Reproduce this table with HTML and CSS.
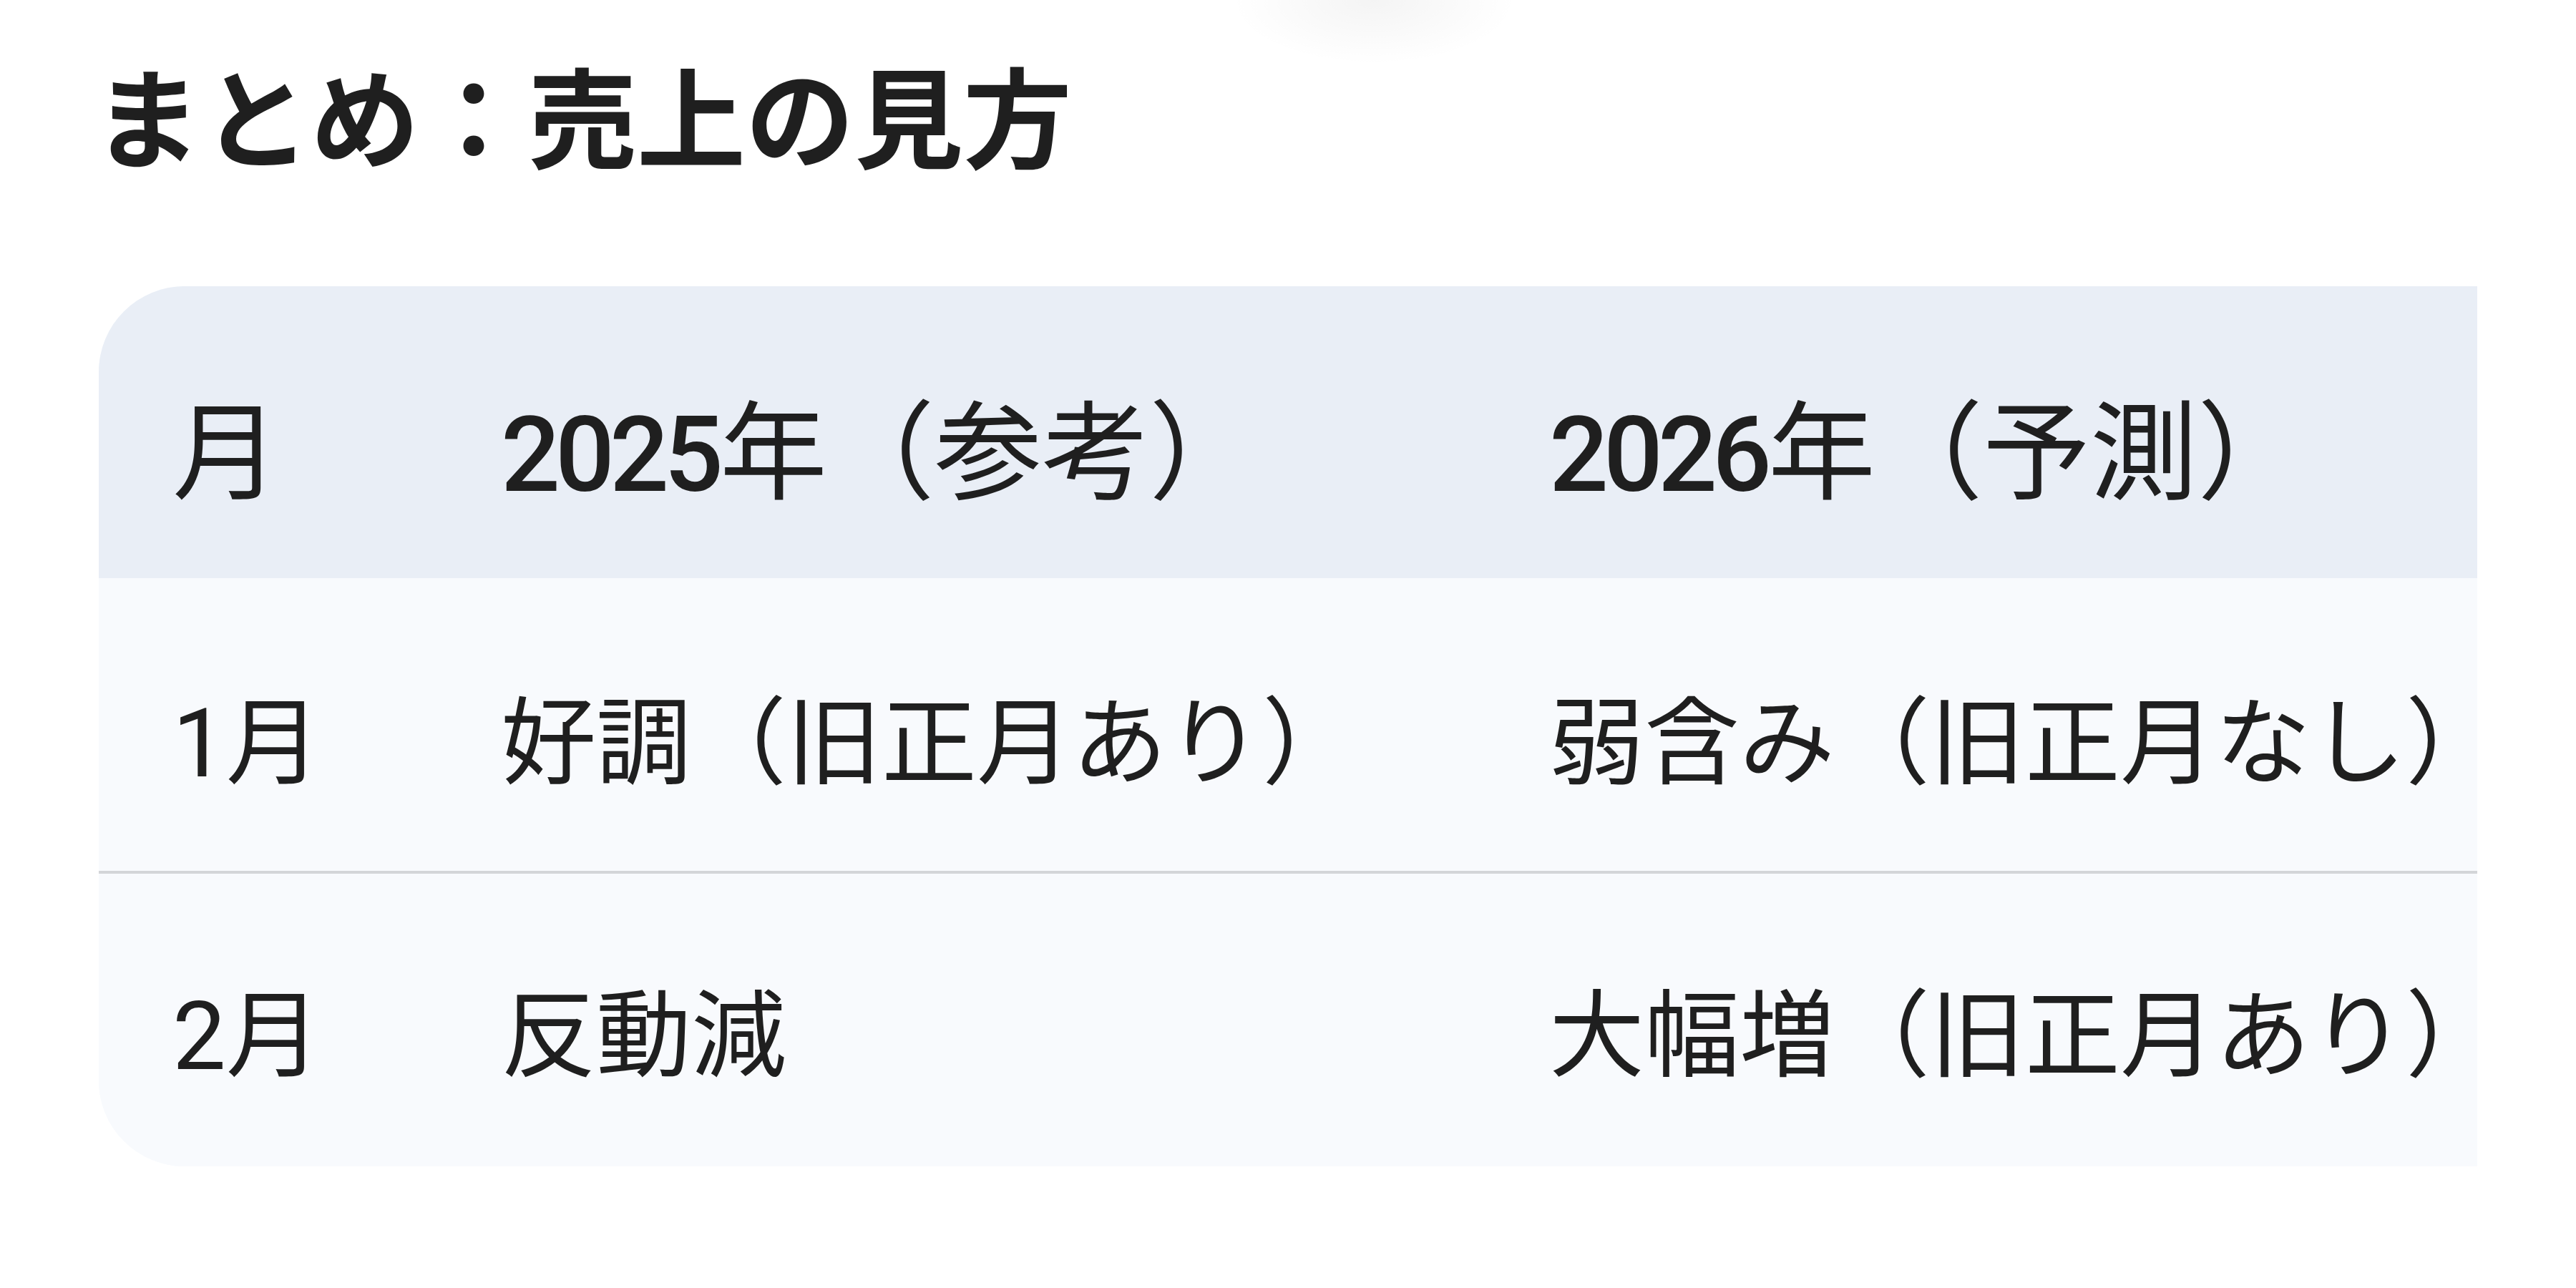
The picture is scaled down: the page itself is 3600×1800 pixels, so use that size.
FILE: index.html
```html
<!DOCTYPE html>
<html lang="ja">
<head>
<meta charset="utf-8">
<title>まとめ：売上の見方</title>
<link rel="stylesheet" href="styles.css">
</head>
<body>
<div class="top-shadow"></div>
<main class="content">
  <h2 class="title">まとめ：売上の見方</h2>
  <div class="table-card">
    <table class="sales">
      <thead>
        <tr>
          <th class="col-month">月</th>
          <th class="col-2025"><span class="num">2025</span>年（参考）</th>
          <th class="col-2026"><span class="num">2026</span>年（予測）</th>
        </tr>
      </thead>
      <tbody>
        <tr>
          <td class="col-month">1月</td>
          <td>好調（旧正月あり）</td>
          <td class="col-2026">弱含み（旧正月なし<span class="trim">）</span></td>
        </tr>
        <tr>
          <td class="col-month">2月</td>
          <td>反動減</td>
          <td class="col-2026">大幅増（旧正月あり<span class="trim">）</span></td>
        </tr>
      </tbody>
    </table>
  </div>
</main>
</body>
</html>
```
FILE: styles.css
```css
html, body {
  margin: 0;
  padding: 0;
  background: #ffffff;
}

body {
  font-family: "Roboto", "Noto Sans CJK JP", sans-serif;
  color: #1f1f1f;
  width: 3600px;
  height: 1800px;
  overflow: hidden;
  position: relative;
}

.top-shadow {
  position: absolute;
  top: 0;
  left: 1720px;
  width: 400px;
  height: 100px;
  background: radial-gradient(ellipse 50% 90% at 50% 0%, rgba(0, 0, 0, 0.045), rgba(0, 0, 0, 0) 100%);
  pointer-events: none;
}

.content {
  padding-left: 138px;
  width: 3324px;
}

.title {
  margin: 0 0 138px -8px;
  padding: 82px 0 0 0;
  font-size: 152px;
  line-height: 180px;
  font-weight: 700;
  color: #1f1f1f;
}

.table-card {
  width: 3324px;
  border-radius: 120px 0 0 120px;
  overflow: hidden;
  background: #f8fafd;
}

.sales {
  width: 100%;
  border-collapse: separate;
  border-spacing: 0;
  white-space: nowrap;
}

.sales th,
.sales td {
  text-align: left;
  padding-left: 96px;
  padding-right: 96px;
  vertical-align: top;
}

.sales thead th {
  background: #e9eef6;
  font-size: 150px;
  font-weight: 400;
  line-height: 200px;
  padding-top: 135px;
  padding-bottom: 71px;
}

.sales thead .num {
  font-weight: 500;
  font-size: 146px;
  letter-spacing: -7px;
  margin-right: 2px;
}

.sales tbody td {
  background: #f8fafd;
  font-size: 133px;
  font-weight: 400;
  line-height: 200px;
  padding-top: 132px;
  padding-bottom: 77px;
}

.sales tbody tr + tr td {
  border-top: 4px solid #d3d5d8;
  padding-top: 128px;
  padding-bottom: 81px;
}

.sales .col-month {
  width: 267px;
  padding-left: 103px;
}

.sales .col-2025 {
  width: 1273px;
}

.sales .col-2026 {
  padding-right: 0;
}

.trim {
  font-feature-settings: "halt" 1;
}
```
